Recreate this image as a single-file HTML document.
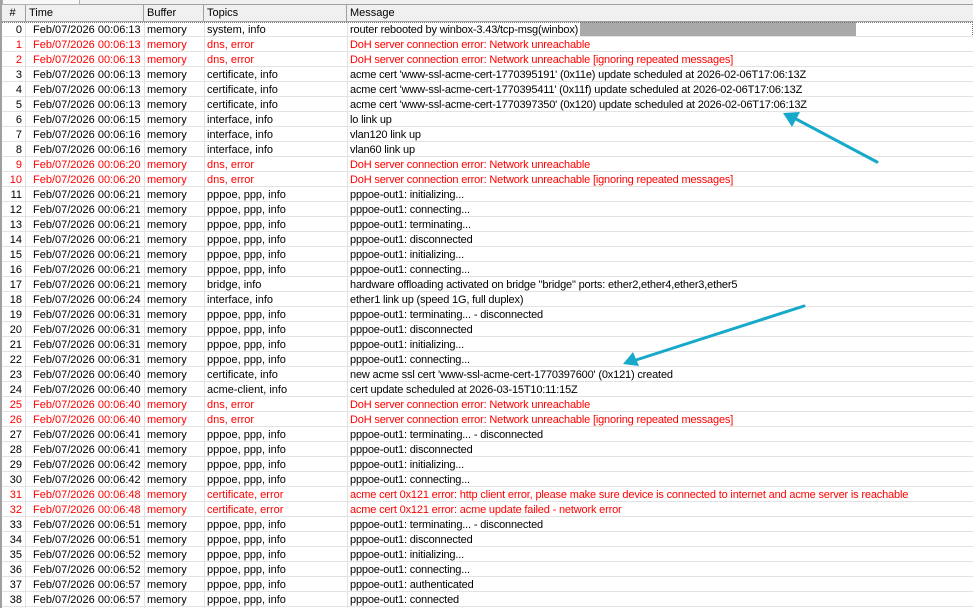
<!DOCTYPE html>
<html><head><meta charset="utf-8"><style>
body{margin:0;width:973px;height:608px;overflow:hidden;background:#fff;font-family:"Liberation Sans",Arial,sans-serif;font-size:11px;color:#000;position:relative}
.top{position:absolute;left:0;top:0;width:973px;height:4px;background:#f0f0f0;border-bottom:1px solid #a0a0a0}
.tab{position:absolute;left:2px;top:0;width:76px;height:4px;border:1px solid #b0b0b0;border-top:none;background:#f8f8f8}
.hdr{position:absolute;left:0;top:5px;width:973px;height:16px;background:#f0f0f0;border-bottom:1px solid #a0a0a0}
.hdr div{position:absolute;top:0;height:16px;line-height:17px;border-right:1px solid #a0a0a0;padding-left:3px;box-sizing:border-box}
.r{position:absolute;left:0;width:973px;height:15px;line-height:16px;border-bottom:1px solid #e3e3e3;box-sizing:border-box;white-space:nowrap}
.r span{position:absolute;top:0}
.n{width:22px;text-align:right;left:0}
.t{left:33px}.b{left:147px}.p{left:207px}.m{left:350px;letter-spacing:-0.17px}
.e{color:#ff0000}
.vl{position:absolute;top:22px;bottom:0;width:1px;background:#e3e3e3}
</style></head><body>
<div class="top"><div class="tab"></div></div>
<div class="hdr">
<div style="left:0;width:26px;text-align:center;padding:0">#</div>
<div style="left:26px;width:118px">Time</div>
<div style="left:144px;width:60px">Buffer</div>
<div style="left:204px;width:143px">Topics</div>
<div style="left:347px;width:626px;border-right:none">Message</div>
</div>
<div class="vl" style="left:25px"></div><div class="vl" style="left:144px"></div><div class="vl" style="left:204px"></div><div class="vl" style="left:347px"></div>
<div style="position:absolute;left:580px;top:22px;width:276px;height:14px;background:#a9a9a9"></div>
<div style="position:absolute;left:0;top:22px;width:971px;height:13px;border:1px dotted #777"></div>
<div class="r" style="top:22px"><span class="n">0</span><span class="t">Feb/07/2026 00:06:13</span><span class="b">memory</span><span class="p">system, info</span><span class="m">router rebooted by winbox-3.43/tcp-msg(winbox)</span></div>
<div class="r e" style="top:37px"><span class="n">1</span><span class="t">Feb/07/2026 00:06:13</span><span class="b">memory</span><span class="p">dns, error</span><span class="m">DoH server connection error: Network unreachable</span></div>
<div class="r e" style="top:52px"><span class="n">2</span><span class="t">Feb/07/2026 00:06:13</span><span class="b">memory</span><span class="p">dns, error</span><span class="m">DoH server connection error: Network unreachable [ignoring repeated messages]</span></div>
<div class="r" style="top:67px"><span class="n">3</span><span class="t">Feb/07/2026 00:06:13</span><span class="b">memory</span><span class="p">certificate, info</span><span class="m">acme cert 'www-ssl-acme-cert-1770395191' (0x11e) update scheduled at 2026-02-06T17:06:13Z</span></div>
<div class="r" style="top:82px"><span class="n">4</span><span class="t">Feb/07/2026 00:06:13</span><span class="b">memory</span><span class="p">certificate, info</span><span class="m">acme cert 'www-ssl-acme-cert-1770395411' (0x11f) update scheduled at 2026-02-06T17:06:13Z</span></div>
<div class="r" style="top:97px"><span class="n">5</span><span class="t">Feb/07/2026 00:06:13</span><span class="b">memory</span><span class="p">certificate, info</span><span class="m">acme cert 'www-ssl-acme-cert-1770397350' (0x120) update scheduled at 2026-02-06T17:06:13Z</span></div>
<div class="r" style="top:112px"><span class="n">6</span><span class="t">Feb/07/2026 00:06:15</span><span class="b">memory</span><span class="p">interface, info</span><span class="m">lo link up</span></div>
<div class="r" style="top:127px"><span class="n">7</span><span class="t">Feb/07/2026 00:06:16</span><span class="b">memory</span><span class="p">interface, info</span><span class="m">vlan120 link up</span></div>
<div class="r" style="top:142px"><span class="n">8</span><span class="t">Feb/07/2026 00:06:16</span><span class="b">memory</span><span class="p">interface, info</span><span class="m">vlan60 link up</span></div>
<div class="r e" style="top:157px"><span class="n">9</span><span class="t">Feb/07/2026 00:06:20</span><span class="b">memory</span><span class="p">dns, error</span><span class="m">DoH server connection error: Network unreachable</span></div>
<div class="r e" style="top:172px"><span class="n">10</span><span class="t">Feb/07/2026 00:06:20</span><span class="b">memory</span><span class="p">dns, error</span><span class="m">DoH server connection error: Network unreachable [ignoring repeated messages]</span></div>
<div class="r" style="top:187px"><span class="n">11</span><span class="t">Feb/07/2026 00:06:21</span><span class="b">memory</span><span class="p">pppoe, ppp, info</span><span class="m">pppoe-out1: initializing...</span></div>
<div class="r" style="top:202px"><span class="n">12</span><span class="t">Feb/07/2026 00:06:21</span><span class="b">memory</span><span class="p">pppoe, ppp, info</span><span class="m">pppoe-out1: connecting...</span></div>
<div class="r" style="top:217px"><span class="n">13</span><span class="t">Feb/07/2026 00:06:21</span><span class="b">memory</span><span class="p">pppoe, ppp, info</span><span class="m">pppoe-out1: terminating...</span></div>
<div class="r" style="top:232px"><span class="n">14</span><span class="t">Feb/07/2026 00:06:21</span><span class="b">memory</span><span class="p">pppoe, ppp, info</span><span class="m">pppoe-out1: disconnected</span></div>
<div class="r" style="top:247px"><span class="n">15</span><span class="t">Feb/07/2026 00:06:21</span><span class="b">memory</span><span class="p">pppoe, ppp, info</span><span class="m">pppoe-out1: initializing...</span></div>
<div class="r" style="top:262px"><span class="n">16</span><span class="t">Feb/07/2026 00:06:21</span><span class="b">memory</span><span class="p">pppoe, ppp, info</span><span class="m">pppoe-out1: connecting...</span></div>
<div class="r" style="top:277px"><span class="n">17</span><span class="t">Feb/07/2026 00:06:21</span><span class="b">memory</span><span class="p">bridge, info</span><span class="m">hardware offloading activated on bridge "bridge" ports: ether2,ether4,ether3,ether5</span></div>
<div class="r" style="top:292px"><span class="n">18</span><span class="t">Feb/07/2026 00:06:24</span><span class="b">memory</span><span class="p">interface, info</span><span class="m">ether1 link up (speed 1G, full duplex)</span></div>
<div class="r" style="top:307px"><span class="n">19</span><span class="t">Feb/07/2026 00:06:31</span><span class="b">memory</span><span class="p">pppoe, ppp, info</span><span class="m">pppoe-out1: terminating... - disconnected</span></div>
<div class="r" style="top:322px"><span class="n">20</span><span class="t">Feb/07/2026 00:06:31</span><span class="b">memory</span><span class="p">pppoe, ppp, info</span><span class="m">pppoe-out1: disconnected</span></div>
<div class="r" style="top:337px"><span class="n">21</span><span class="t">Feb/07/2026 00:06:31</span><span class="b">memory</span><span class="p">pppoe, ppp, info</span><span class="m">pppoe-out1: initializing...</span></div>
<div class="r" style="top:352px"><span class="n">22</span><span class="t">Feb/07/2026 00:06:31</span><span class="b">memory</span><span class="p">pppoe, ppp, info</span><span class="m">pppoe-out1: connecting...</span></div>
<div class="r" style="top:367px"><span class="n">23</span><span class="t">Feb/07/2026 00:06:40</span><span class="b">memory</span><span class="p">certificate, info</span><span class="m">new acme ssl cert 'www-ssl-acme-cert-1770397600' (0x121) created</span></div>
<div class="r" style="top:382px"><span class="n">24</span><span class="t">Feb/07/2026 00:06:40</span><span class="b">memory</span><span class="p">acme-client, info</span><span class="m">cert update scheduled at 2026-03-15T10:11:15Z</span></div>
<div class="r e" style="top:397px"><span class="n">25</span><span class="t">Feb/07/2026 00:06:40</span><span class="b">memory</span><span class="p">dns, error</span><span class="m">DoH server connection error: Network unreachable</span></div>
<div class="r e" style="top:412px"><span class="n">26</span><span class="t">Feb/07/2026 00:06:40</span><span class="b">memory</span><span class="p">dns, error</span><span class="m">DoH server connection error: Network unreachable [ignoring repeated messages]</span></div>
<div class="r" style="top:427px"><span class="n">27</span><span class="t">Feb/07/2026 00:06:41</span><span class="b">memory</span><span class="p">pppoe, ppp, info</span><span class="m">pppoe-out1: terminating... - disconnected</span></div>
<div class="r" style="top:442px"><span class="n">28</span><span class="t">Feb/07/2026 00:06:41</span><span class="b">memory</span><span class="p">pppoe, ppp, info</span><span class="m">pppoe-out1: disconnected</span></div>
<div class="r" style="top:457px"><span class="n">29</span><span class="t">Feb/07/2026 00:06:42</span><span class="b">memory</span><span class="p">pppoe, ppp, info</span><span class="m">pppoe-out1: initializing...</span></div>
<div class="r" style="top:472px"><span class="n">30</span><span class="t">Feb/07/2026 00:06:42</span><span class="b">memory</span><span class="p">pppoe, ppp, info</span><span class="m">pppoe-out1: connecting...</span></div>
<div class="r e" style="top:487px"><span class="n">31</span><span class="t">Feb/07/2026 00:06:48</span><span class="b">memory</span><span class="p">certificate, error</span><span class="m">acme cert 0x121 error: http client error, please make sure device is connected to internet and acme server is reachable</span></div>
<div class="r e" style="top:502px"><span class="n">32</span><span class="t">Feb/07/2026 00:06:48</span><span class="b">memory</span><span class="p">certificate, error</span><span class="m">acme cert 0x121 error: acme update failed - network error</span></div>
<div class="r" style="top:517px"><span class="n">33</span><span class="t">Feb/07/2026 00:06:51</span><span class="b">memory</span><span class="p">pppoe, ppp, info</span><span class="m">pppoe-out1: terminating... - disconnected</span></div>
<div class="r" style="top:532px"><span class="n">34</span><span class="t">Feb/07/2026 00:06:51</span><span class="b">memory</span><span class="p">pppoe, ppp, info</span><span class="m">pppoe-out1: disconnected</span></div>
<div class="r" style="top:547px"><span class="n">35</span><span class="t">Feb/07/2026 00:06:52</span><span class="b">memory</span><span class="p">pppoe, ppp, info</span><span class="m">pppoe-out1: initializing...</span></div>
<div class="r" style="top:562px"><span class="n">36</span><span class="t">Feb/07/2026 00:06:52</span><span class="b">memory</span><span class="p">pppoe, ppp, info</span><span class="m">pppoe-out1: connecting...</span></div>
<div class="r" style="top:577px"><span class="n">37</span><span class="t">Feb/07/2026 00:06:57</span><span class="b">memory</span><span class="p">pppoe, ppp, info</span><span class="m">pppoe-out1: authenticated</span></div>
<div class="r" style="top:592px"><span class="n">38</span><span class="t">Feb/07/2026 00:06:57</span><span class="b">memory</span><span class="p">pppoe, ppp, info</span><span class="m">pppoe-out1: connected</span></div>
<div style="position:absolute;left:0;top:0;width:2px;height:608px;background:#a0a0a0"></div>
<svg style="position:absolute;left:0;top:0" width="973" height="608">
<g stroke="#16a9c9" stroke-width="3" stroke-linecap="round" fill="#16a9c9">
<line x1="877" y1="162" x2="796" y2="119"/>
<line x1="804" y1="306" x2="636" y2="360"/>
</g>
<polygon fill="#16a9c9" points="783,113 800,112 792,127"/>
<polygon fill="#16a9c9" points="623,364 633,352 639,366"/>
</svg>
</body></html>
